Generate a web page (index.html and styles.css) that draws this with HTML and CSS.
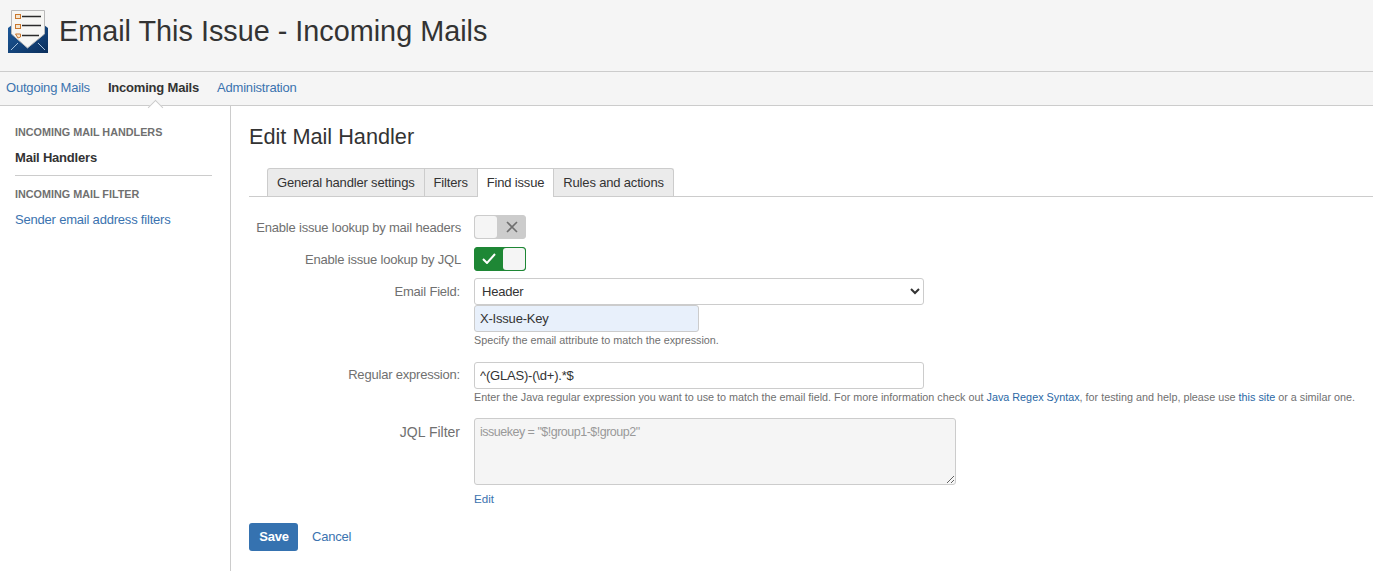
FILE: index.html
```html
<!DOCTYPE html>
<html lang="en">
<head>
<meta charset="utf-8">
<title>Email This Issue - Incoming Mails</title>
<link rel="stylesheet" href="styles.css">
</head>
<body>
<header class="page-header">
  <svg class="logo" width="41" height="44" viewBox="0 0 41 44" aria-hidden="true">
    <defs>
      <linearGradient id="env" x1="0" y1="0" x2="1" y2="1">
        <stop offset="0" stop-color="#1d5a9c"/><stop offset="1" stop-color="#0b2f5c"/>
      </linearGradient>
    </defs>
    <path d="M0 18 L4 15 H36 L40 18 V43 H0 Z" fill="url(#env)"/>
    <path d="M3.500 .5 H36.500 V24 L19.500 38 L3.500 24 Z" fill="#f6f6f4" stroke="#b9b9b9" stroke-width="1"/>
    <g fill="#f5e6d0" stroke="#c9772e" stroke-width="1">
      <rect x="7.500" y="4.500" width="5" height="4"/>
      <rect x="7.500" y="14.500" width="5" height="4"/>
      <path d="M7.500 24 H12.500 V27 L10 28 Z"/>
    </g>
    <g stroke="#2b2b2b" stroke-width="1.500">
      <path d="M14 6.500 H33"/><path d="M14 15.500 H33"/><path d="M14 25.500 H31"/>
    </g>
    <g stroke="#a9c2dc" stroke-width="1"><path d="M3 40 L10 33"/><path d="M37 40 L30 33"/></g>
  </svg>
  <h1 class="page-title">Email This Issue - Incoming Mails</h1>
</header>
<nav class="top-nav">
  <a class="nav-link" href="#">Outgoing Mails</a>
  <a class="nav-link active" href="#">Incoming Mails</a>
  <a class="nav-link" href="#">Administration</a>
</nav>
<div class="layout">
  <aside class="sidebar">
    <h2 class="side-heading">INCOMING MAIL HANDLERS</h2>
    <a class="side-link current" href="#">Mail Handlers</a>
    <hr class="side-rule">
    <h2 class="side-heading">INCOMING MAIL FILTER</h2>
    <a class="side-link" href="#">Sender email address filters</a>
  </aside>
  <main class="content">
    <h2 class="content-title">Edit Mail Handler</h2>
    <div class="tabs">
      <a class="tab" href="#">General handler settings</a>
      <a class="tab" href="#">Filters</a>
      <a class="tab selected" href="#">Find issue</a>
      <a class="tab" href="#">Rules and actions</a>
    </div>
    <form class="form">
      <div class="row row-toggle first">
        <label class="label">Enable issue lookup by mail headers</label>
        <div class="toggle off">
          <span class="knob"></span>
          <svg class="tog-icon" width="12" height="12" viewBox="0 0 12 12" aria-hidden="true"><path d="M1 1 L11 11 M11 1 L1 11" stroke="#6f6f6f" stroke-width="1.600" fill="none"/></svg>
        </div>
      </div>
      <div class="row row-toggle">
        <label class="label">Enable issue lookup by JQL</label>
        <div class="toggle on">
          <svg class="tog-icon" width="14" height="11" viewBox="0 0 14 11" aria-hidden="true"><path d="M1 6 L5 10 L13 1" stroke="#fff" stroke-width="2" fill="none"/></svg>
          <span class="knob"></span>
        </div>
      </div>
      <div class="row row-email">
        <label class="label short">Email Field:</label>
        <div class="field">
          <select class="select"><option>Header</option></select>
          <input class="text-input small filled" value="X-Issue-Key">
          <div class="hint">Specify the email attribute to match the expression.</div>
        </div>
      </div>
      <div class="row row-regex">
        <label class="label short">Regular expression:</label>
        <div class="field">
          <input class="text-input wide" value="^(GLAS)-(\d+).*$">
          <div class="hint nowrap">Enter the Java regular expression you want to use to match the email field. For more information check out <a class="link" href="#">Java Regex Syntax</a>, for testing and help, please use <a class="link" href="#">this site</a> or a similar one.</div>
        </div>
      </div>
      <div class="row row-jql">
        <label class="label short">JQL Filter</label>
        <div class="field">
          <textarea class="textarea" disabled>issuekey = "$!group1-$!group2"</textarea>
          <a class="edit-link" href="#">Edit</a>
        </div>
      </div>
      <div class="actions">
        <button class="save" type="button">Save</button>
        <a class="cancel" href="#">Cancel</a>
      </div>
    </form>
  </main>
</div>
</body>
</html>
```
FILE: styles.css
```css
* { box-sizing: border-box; }
html, body { height: 100%; }
body {
  margin: 0;
  font-family: "Liberation Sans", Arial, sans-serif;
  font-size: 13px;
  letter-spacing: -0.2px;
  color: #333;
  background: #fff;
  display: flex;
  flex-direction: column;
  overflow: hidden;
}
a { text-decoration: none; color: #3b73af; }

.page-header {
  height: 72px;
  flex: none;
  background: #f5f5f5;
  border-bottom: 1px solid #ccc;
  display: flex;
  align-items: flex-start;
  padding: 10px 0 0 8px;
}
.logo { flex: none; }
.page-title {
  margin: 3px 0 0 10px;
  font-size: 28.800px;
  line-height: 36px;
  font-weight: 400;
  letter-spacing: 0;
  color: #333;
}

.top-nav {
  height: 34px;
  flex: none;
  background: #f5f5f5;
  border-bottom: 1px solid #ccc;
  display: flex;
  gap: 18px;
  padding: 0 0 0 6px;
  align-items: flex-start;
  position: relative;
}
.nav-link { line-height: 18px; margin-top: 7px; }
.nav-link.active { font-weight: 700; color: #333; position: relative; }
.nav-link.active::after {
  content: "";
  position: absolute;
  left: 42px;
  top: 23px;
  width: 10px;
  height: 10px;
  background: #fff;
  border-left: 1px solid #ccc;
  border-top: 1px solid #ccc;
  transform: rotate(45deg);
}

.layout { flex: 1; display: flex; min-height: 0; }
.sidebar {
  width: 231px;
  flex: none;
  border-right: 1px solid #ccc;
  padding: 19px 18px 0 15px;
}
.side-heading {
  margin: 0;
  font-size: 10.800px;
  letter-spacing: 0;
  line-height: 14px;
  font-weight: 700;
  color: #707070;
}
.side-link { display: block; line-height: 18px; margin-top: 10px; }
.side-link.current { font-weight: 700; color: #333; }
.side-rule { border: 0; border-top: 1px solid #ccc; margin: 8px 0 11px; }

.content { flex: 1; min-width: 0; padding: 0 0 0 18px; }
.content-title {
  margin: 17px 0 0;
  font-size: 21.700px;
  letter-spacing: 0;
  line-height: 28px;
  font-weight: 400;
  color: #333;
}
.tabs {
  margin-top: 17px;
  height: 29px;
  border-bottom: 1px solid #ccc;
  padding-left: 18px;
  display: flex;
}
.tab {
  height: 28px;
  line-height: 28px;
  padding: 0 9px;
  background: #ebebeb;
  border: 1px solid #ccc;
  border-bottom: 0;
  border-left-width: 0;
  letter-spacing: -0.17px;
  color: #333;
}
.tab:first-child { border-left-width: 1px; border-top-left-radius: 3px; }
.tab:last-child { border-top-right-radius: 3px; }
.tab.selected { background: #fff; height: 29px; }

.form { display: block; }
.row { display: flex; align-items: flex-start; }
.label {
  width: 212px;
  flex: none;
  text-align: right;
  color: #707070;
  line-height: 18px;
}
.label.short { width: 211px; }
.row-toggle { height: 24px; align-items: center; margin-top: 8px; }
.row-toggle .label { padding-top: 2px; }
.row-toggle.first { margin-top: 18px; }
.toggle {
  width: 52px;
  height: 24px;
  margin-left: 13px;
  border-radius: 3px;
  display: flex;
  align-items: center;
  justify-content: space-between;
}
.toggle.off { background: #ccc; border: 1px solid #ccc; }
.toggle.on { background: #1e8735; border: 1px solid #1e8735; }
.knob {
  width: 22px;
  height: 22px;
  background: #f5f5f5;
  border-radius: 3px;
}
.toggle.off .tog-icon { margin-right: 7px; }
.toggle.on .tog-icon { margin-left: 7px; margin-top: -2px; }

.row-email { margin-top: 7px; }
.row-email .label { padding-top: 5px; }
.row-regex .label { padding-top: 4px; }
.field { margin-left: 14px; flex: none; }
.select, .text-input, .textarea {
  display: block;
  font-family: "Liberation Sans", Arial, sans-serif;
  font-size: 13px;
  letter-spacing: -0.2px;
  color: #333;
  border: 1px solid #ccc;
  border-radius: 3px;
  background: #fff;
}
.select { width: 450px; height: 27px; padding: 0 3px; }
.text-input { height: 27px; padding: 0 5px; }
.text-input.small { width: 225px; }
.text-input.filled { background: #e8f0fb; }
.text-input.wide { width: 450px; }
.hint {
  font-size: 10.800px;
  letter-spacing: 0;
  line-height: 14px;
  margin-top: 1px;
  color: #707070;
}
.hint.nowrap { white-space: nowrap; }
.link { color: #2a67a5; }
.row-regex { margin-top: 15px; }
.row-jql { margin-top: 14px; }
.row-jql .label { padding-top: 5px; font-size: 14px; letter-spacing: 0; }
.textarea {
  width: 482px;
  height: 67px;
  padding: 6px 5px;
  background: #f5f5f5;
  color: #999;
  font-size: 12.500px;
  letter-spacing: -0.5px;
  resize: both;
}
.edit-link { display: block; font-size: 11.600px; letter-spacing: 0; line-height: 14px; margin-top: 7px; }
.actions { display: flex; align-items: center; margin-top: 17px; }
.save {
  width: 49px;
  height: 28px;
  border: 0;
  border-radius: 3px;
  background: #3572b0;
  color: #fff;
  font-family: "Liberation Sans", Arial, sans-serif;
  font-size: 13px;
  letter-spacing: -0.2px;
  font-weight: 700;
  padding: 0 0 2px 1px;
}
.cancel { margin-left: 14px; margin-top: -2px; }
```
